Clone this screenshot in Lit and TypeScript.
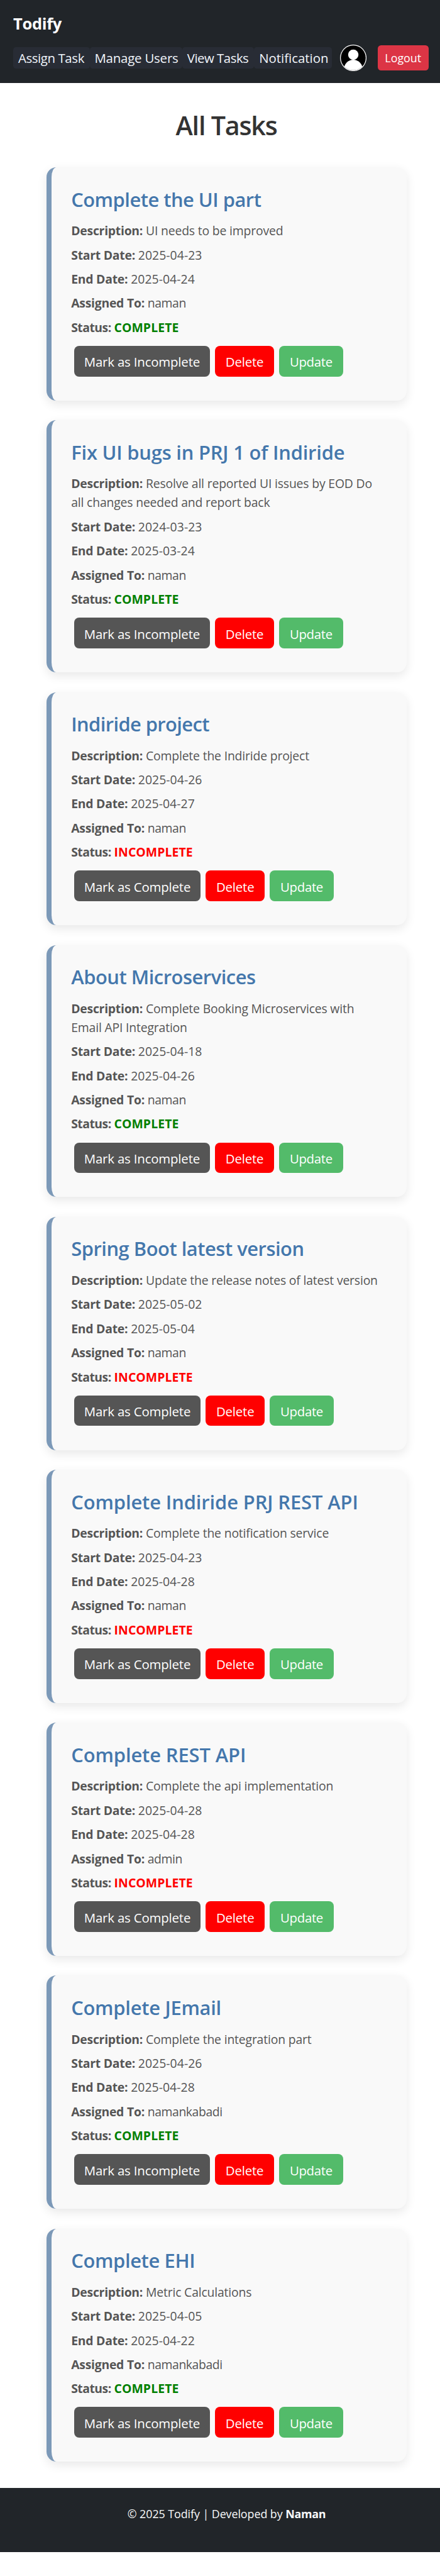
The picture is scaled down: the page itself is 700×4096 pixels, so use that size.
import { LitElement, html, css, svg } from "lit";
import { classMap } from "lit/directives/class-map.js";
import { styleMap } from "lit/directives/style-map.js";

interface Task {
  title: string;
  /** Letter spacing of the title, in thousandths of an em. */
  tracking: number;
  description: string;
  start: string;
  end: string;
  assignee: string;
  complete: boolean;
}

const TASKS: Task[] = [
  { title: "Complete the UI part", tracking: -16, description: "UI needs to be improved", start: "2025-04-23", end: "2025-04-24", assignee: "naman", complete: true },
  { title: "Fix UI bugs in PRJ 1 of Indiride", tracking: -6, description: "Resolve all reported UI issues by EOD Do all changes needed and report back", start: "2024-03-23", end: "2025-03-24", assignee: "naman", complete: true },
  { title: "Indiride project", tracking: -19, description: "Complete the Indiride project", start: "2025-04-26", end: "2025-04-27", assignee: "naman", complete: false },
  { title: "About Microservices", tracking: -15, description: "Complete Booking Microservices with Email API Integration", start: "2025-04-18", end: "2025-04-26", assignee: "naman", complete: true },
  { title: "Spring Boot latest version", tracking: -15, description: "Update the release notes of latest version", start: "2025-05-02", end: "2025-05-04", assignee: "naman", complete: false },
  { title: "Complete Indiride PRJ REST API", tracking: -3, description: "Complete the notification service", start: "2025-04-23", end: "2025-04-28", assignee: "naman", complete: false },
  { title: "Complete REST API", tracking: -3, description: "Complete the api implementation", start: "2025-04-28", end: "2025-04-28", assignee: "admin", complete: false },
  { title: "Complete JEmail", tracking: -8, description: "Complete the integration part", start: "2025-04-26", end: "2025-04-28", assignee: "namankabadi", complete: true },
  { title: "Complete EHI", tracking: -11, description: "Metric Calculations", start: "2025-04-05", end: "2025-04-22", assignee: "namankabadi", complete: true },
];

class TaskCard extends LitElement {
  static properties = { task: { attribute: false } };
  declare task: Task;

  static styles = css`
    :host {
      display: block;
      box-sizing: border-box;
      background: #f9f9f9;
      border-left: 8px solid #7c99b8;
      border-radius: calc(18 * var(--u));
      padding: calc(37 * var(--u)) calc(36 * var(--u)) calc(36 * var(--u));
      box-shadow: 0 calc(6 * var(--u)) calc(18 * var(--u)) rgba(0, 0, 0, 0.09);
    }
    h3 {
      margin: 0 0 calc(18 * var(--u));
      font-size: calc(35.2 * var(--u));
      line-height: calc(43.2 * var(--u));
      font-weight: 600;
      color: #4477ac;
      white-space: nowrap;
    }
    p {
      margin: 0 0 calc(9.6 * var(--u));
      font-size: calc(22.1 * var(--u));
      line-height: calc(34.2 * var(--u));
      letter-spacing: -0.009em;
      color: #555;
    }
    b {
      font-weight: 700;
      letter-spacing: -0.013em;
    }
    .tight {
      letter-spacing: -0.027em;
    }
    .date {
      letter-spacing: 0.003em;
    }
    .name {
      letter-spacing: -0.022em;
    }
    .state {
      letter-spacing: 0.0055em;
      color: red;
    }
    .state.done {
      color: green;
    }
    .actions {
      display: flex;
      gap: calc(9.3 * var(--u));
      padding: calc(6.5 * var(--u)) 0 calc(7.5 * var(--u)) calc(5 * var(--u));
    }
    button {
      box-sizing: border-box;
      height: calc(55.5 * var(--u));
      padding: calc(2.6 * var(--u)) 0 0;
      border: 0;
      border-radius: calc(9 * var(--u));
      font-family: inherit;
      font-size: calc(23.3 * var(--u));
      letter-spacing: -0.009em;
      color: #fff;
      white-space: nowrap;
    }
    .toggle {
      width: calc(230 * var(--u));
      background: #555;
    }
    .toggle.wide {
      width: calc(247 * var(--u));
    }
    .delete {
      width: calc(106.7 * var(--u));
      background: red;
    }
    .update {
      width: calc(116 * var(--u));
      background: #53bb6a;
      letter-spacing: -0.016em;
    }
  `;

  render() {
    const t = this.task;
    return html`
      <h3 style=${styleMap({ letterSpacing: `${t.tracking / 1000}em` })}>${t.title}</h3>
      <p><b>Description:</b> ${t.description}</p>
      <p><b>Start Date:</b> <span class="date">${t.start}</span></p>
      <p><b>End Date:</b> <span class="date">${t.end}</span></p>
      <p><b>Assigned To:</b> <span class="name">${t.assignee}</span></p>
      <p><b class="tight">Status:</b> <b class=${classMap({ state: true, done: t.complete })}>${t.complete ? "COMPLETE" : "INCOMPLETE"}</b></p>
      <div class="actions">
        <button class=${classMap({ toggle: true, wide: t.complete })}>Mark as ${t.complete ? "Incomplete" : "Complete"}</button>
        <button class="delete">Delete</button>
        <button class="update">Update</button>
      </div>
    `;
  }
}
customElements.define("task-card", TaskCard);

const avatar = svg`
  <clipPath id="disc"><circle cx="24" cy="24" r="22.6" /></clipPath>
  <circle cx="24" cy="24" r="24" fill="#fff" />
  <g clip-path="url(#disc)">
    <rect width="48" height="48" fill="#000" />
    <circle cx="24" cy="18.2" r="9.4" fill="#fff" />
    <ellipse cx="24" cy="45" rx="17" ry="17.6" fill="#fff" />
  </g>
`;

class AppRoot extends LitElement {
  static styles = css`
    :host {
      --u: 0.877px;
      display: block;
      height: 4096px;
      overflow: hidden;
      background: #fff;
      font-family: "Open Sans", "Noto Sans", sans-serif;
    }
    nav {
      box-sizing: border-box;
      height: calc(150 * var(--u));
      padding: calc(18 * var(--u)) calc(21 * var(--u)) 0 calc(24 * var(--u));
      background: #212529;
    }
    .brand {
      height: calc(63 * var(--u));
      font-size: calc(29.1 * var(--u));
      line-height: calc(48 * var(--u));
      letter-spacing: -0.013em;
      font-weight: 700;
      color: #fff;
    }
    .row {
      display: flex;
      align-items: center;
      height: calc(48 * var(--u));
    }
    .link {
      box-sizing: border-box;
      height: calc(39 * var(--u));
      padding-left: calc(9 * var(--u));
      border-radius: calc(5 * var(--u));
      background: #282c35;
      color: #f1f5fb;
      font-size: calc(23.3 * var(--u));
      line-height: calc(40 * var(--u));
      white-space: nowrap;
    }
    .assign {
      width: calc(138.5 * var(--u));
      letter-spacing: -0.02em;
    }
    .manage {
      width: calc(168 * var(--u));
      letter-spacing: -0.01em;
    }
    .view {
      width: calc(130.5 * var(--u));
      letter-spacing: -0.025em;
    }
    .notify {
      width: calc(141 * var(--u));
      letter-spacing: -0.001em;
    }
    svg {
      display: block;
      width: calc(48 * var(--u));
      height: calc(48 * var(--u));
      margin: 0 auto 0 calc(15 * var(--u));
    }
    .logout {
      width: calc(92 * var(--u));
      height: calc(46 * var(--u));
      padding: 0;
      border: 0;
      border-radius: calc(6 * var(--u));
      background: #dc3545;
      color: #fff;
      font-family: inherit;
      font-size: calc(20.4 * var(--u));
    }
    main {
      display: flex;
      flex-direction: column;
      gap: calc(36 * var(--u));
      padding: calc(48.8 * var(--u)) calc(61 * var(--u)) calc(48 * var(--u)) calc(84 * var(--u));
    }
    h1 {
      margin: 0 0 calc(11.2 * var(--u));
      font-size: calc(47 * var(--u));
      line-height: calc(57.5 * var(--u));
      letter-spacing: -0.029em;
      font-weight: 600;
      text-align: center;
      color: #333;
    }
    footer {
      box-sizing: border-box;
      height: calc(116 * var(--u));
      padding-top: calc(29 * var(--u));
      padding-left: calc(24 * var(--u));
      background: #212529;
      color: #f8f9fa;
      font-size: calc(20.4 * var(--u));
      line-height: calc(36 * var(--u));
      letter-spacing: -0.004em;
      text-align: center;
    }
    footer b {
      letter-spacing: -0.014em;
    }
  `;

  render() {
    return html`
      <nav>
        <div class="brand">Todify</div>
        <div class="row">
          <span class="link assign">Assign Task</span>
          <span class="link manage">Manage Users</span>
          <span class="link view">View Tasks</span>
          <span class="link notify">Notification</span>
          <svg viewBox="0 0 48 48">${avatar}</svg>
          <button class="logout">Logout</button>
        </div>
      </nav>
      <main>
        <h1>All Tasks</h1>
        ${TASKS.map((t) => html`<task-card .task=${t}></task-card>`)}
      </main>
      <footer>© 2025 Todify | Developed by <b>Naman</b></footer>
    `;
  }
}
customElements.define("app-root", AppRoot);
